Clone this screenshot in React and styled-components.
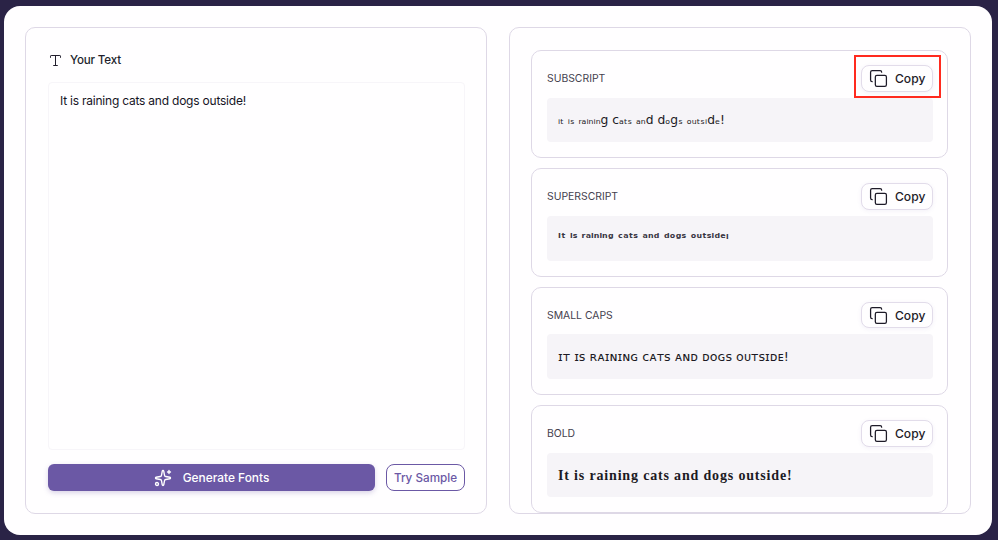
import React from "react";
import styled, { createGlobalStyle } from "styled-components";
import { Copy, Sparkles, Type } from "lucide-react";

const Global = createGlobalStyle`
  html, body { margin: 0; height: 100%; background: #2a2346; }
  * { box-sizing: border-box; }
  #root { height: 540px; }
`;
const Shell = styled.div`
  height: 540px; padding: 6px 6px 5px 4px; background: #2a2346;
  font-family: Inter, "Noto Sans", sans-serif; color: #1d1b26;
`;
const Panel = styled.main`
  height: 529px; background: #fffeff; border-radius: 16px; padding: 21px;
  display: grid; grid-template-columns: 462px 462px; gap: 22px;
`;
const Card = styled.section`
  height: 487px; border: 1px solid #ded8e6; border-radius: 10px; background: #fffeff;
`;
const InputCard = styled(Card)`
  padding: 22px 21px 22px 22px; display: flex; flex-direction: column;
`;
const InputTitle = styled.h2`
  margin: 0; height: 20px; display: flex; align-items: center; gap: 7px;
  font-size: 11.6px; font-weight: 500; letter-spacing: -0.15px; color: #211e2c;
`;
const TextInput = styled.textarea`
  display: block; margin-top: 12px; flex: 1; width: 100%; resize: none; outline: none;
  border: 1px solid #f7f5f9; border-radius: 4px; padding: 9px 11px; background: #fffeff;
  font: 400 12px/18px Inter, sans-serif; letter-spacing: -0.22px; color: #16141f;
`;
const Actions = styled.div`
  margin-top: 14px; display: flex; gap: 11px; height: 27px;
`;
const Generate = styled.button`
  flex: 1; border: 0; border-radius: 6px; background: #6b58a5; color: #fff;
  display: flex; align-items: center; justify-content: center; gap: 11px;
  font: 500 11.9px Inter, sans-serif; box-shadow: 0 2px 5px rgba(107, 88, 165, .25);
`;
const Sample = styled.button`
  width: 79px; border: 1px solid #6b58a5; border-radius: 8px; background: #fffeff;
  color: #6b58a5; font: 500 11.7px Inter, sans-serif; padding: 0;
`;
const ResultsCard = styled(Card)`
  padding: 22.15px 22px 0 21px; overflow: hidden; display: flex; flex-direction: column; gap: 10px;
`;
const Result = styled.article`
  flex: none; height: 108.33px; border: 1px solid #ded8e6; border-radius: 10px;
  padding: 14px 14px 14px 15px; background: #fffeff;
`;
const ResultHead = styled.header`
  display: flex; align-items: center; justify-content: space-between; height: 26.5px; margin-bottom: 6px;
`;
const Label = styled.span`
  font-size: 10.4px; font-weight: 400; color: #45414e; text-transform: uppercase;
`;
const CopyButton = styled.button`
  position: relative; width: 72px; height: 26.5px; border: 1px solid #e2dcea; border-radius: 8px;
  background: #fffeff; display: flex; align-items: center; gap: 7px; padding: 0 0 0 7px;
  font: 500 12.1px Inter, sans-serif; color: #1e1b28; box-shadow: 0 1px 4px rgba(107, 88, 165, .08);
`;
const Marker = styled.span`
  position: absolute; left: -8px; top: -11px; width: 87px; height: 43px;
  border: 2px solid #ff2a1f; pointer-events: none;
`;
const Output = styled.div`
  height: 44.8px; background: #f6f4f8; border-radius: 4px; padding: 0 11px;
  display: flex; align-items: center; color: #1c1a24; white-space: nowrap;
`;
const Subscript = styled.span`
  font: 400 12.3px "DejaVu Sans", "Noto Sans", sans-serif;
`;
const Superscript = styled.span`
  font: 700 12.3px "DejaVu Sans", "Noto Sans", sans-serif;
  color: #383542;
`;
const SmallCaps = styled.span`
  font: 400 12.7px "DejaVu Sans", "Noto Sans", sans-serif;
`;
const BoldSerif = styled.span`
  font: 700 14px "Liberation Serif", serif;
  letter-spacing: 0.83px;
  padding-top: 2px;
`;

const rows = [
  { label: "Subscript", Face: Subscript, text: "ᵢₜ ᵢₛ ᵣₐᵢₙᵢₙg cₐₜₛ ₐₙd dₒgₛ ₒᵤₜₛᵢdₑ!", marked: true },
  { label: "Superscript", Face: Superscript, text: "ᴵᵗ ⁱˢ ʳᵃⁱⁿⁱⁿᵍ ᶜᵃᵗˢ ᵃⁿᵈ ᵈᵒᵍˢ ᵒᵘᵗˢⁱᵈᵉᵎ" },
  { label: "Small Caps", Face: SmallCaps, text: "ɪᴛ ɪs ʀᴀɪɴɪɴɢ ᴄᴀᴛs ᴀɴᴅ ᴅᴏɢs ᴏᴜᴛsɪᴅᴇ!" },
  { label: "Bold", Face: BoldSerif, text: "It is raining cats and dogs outside!" },
];

export default function App() {
  return (
    <Shell>
      <Global />
      <Panel>
        <InputCard>
          <InputTitle><Type size={15} strokeWidth={1.6} />Your Text</InputTitle>
          <TextInput readOnly defaultValue="It is raining cats and dogs outside!" />
          <Actions>
            <Generate><Sparkles size={18} strokeWidth={1.8} />Generate Fonts</Generate>
            <Sample>Try Sample</Sample>
          </Actions>
        </InputCard>
        <ResultsCard>
          {rows.map(({ label, Face, text, marked }) => (
            <Result key={label}>
              <ResultHead>
                <Label>{label}</Label>
                <CopyButton>
                  <Copy size={19} strokeWidth={1.6} />Copy
                  {marked && <Marker />}
                </CopyButton>
              </ResultHead>
              <Output><Face>{text}</Face></Output>
            </Result>
          ))}
        </ResultsCard>
      </Panel>
    </Shell>
  );
}
